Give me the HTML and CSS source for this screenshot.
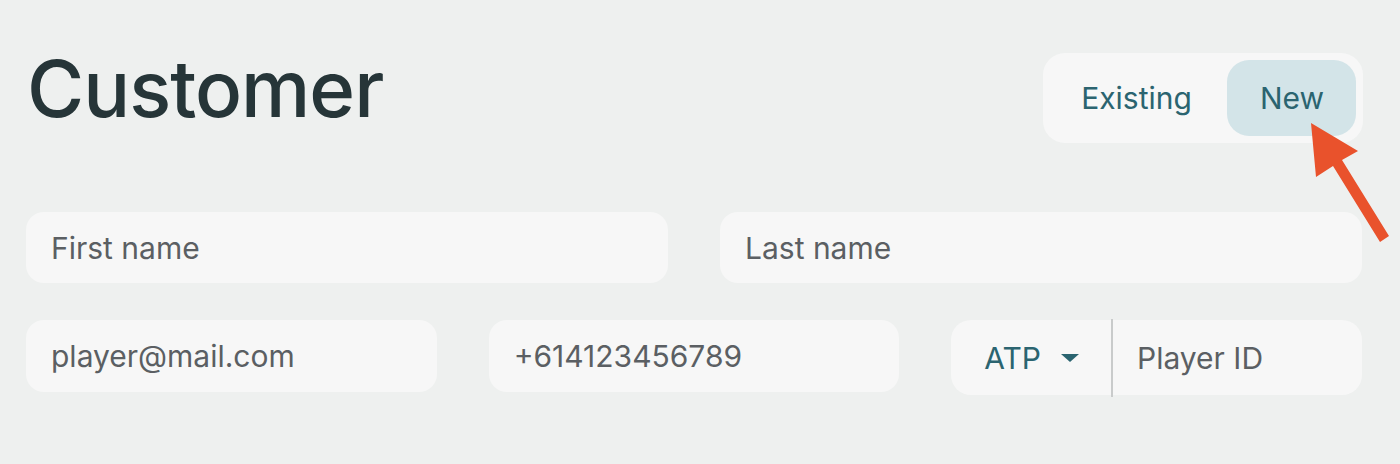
FILE: index.html
```html
<!DOCTYPE html>
<html lang="en">
<head>
<meta charset="utf-8">
<title>Customer</title>
<link rel="stylesheet" href="styles.css">
</head>
<body>
<div class="page">
  <div class="header">
    <h1 class="title">Customer</h1>
    <div class="toggle">
      <button class="toggle-btn">Existing</button>
      <button class="toggle-btn active">New</button>
    </div>
  </div>
  <div class="row row-2">
    <input class="field" type="text" placeholder="First name">
    <input class="field" type="text" placeholder="Last name">
  </div>
  <div class="row row-3">
    <input class="field" type="email" placeholder="player@mail.com">
    <input class="field" type="tel" placeholder="+614123456789">
    <div class="combo">
      <div class="select">
        <span class="select-label">ATP</span>
        <svg class="caret" width="18" height="8" viewBox="0 0 18 8"><path d="M0 0 L18 0 L9 8 Z" fill="#2b6470"/></svg>
      </div>
      <div class="divider"></div>
      <input class="combo-input" type="text" placeholder="Player ID">
    </div>
  </div>
</div>
<svg class="pointer" width="100" height="130" viewBox="1300 115 100 130">
  <path d="M1311 123 L1358 151 L1342 160 L1389 236 L1380 242 L1333 166 L1316 177 Z" fill="#e9522c"/>
</svg>
</body>
</html>
```
FILE: styles.css
```css
* { box-sizing: border-box; }
html, body { margin: 0; padding: 0; }
body {
  background: #eef0ef;
  font-family: Inter, "Noto Sans", sans-serif;
  width: 1400px;
  height: 464px;
  overflow: hidden;
  position: relative;
}
.page {
  padding: 53px 38px 0 26px;
}
.header {
  display: flex;
  justify-content: space-between;
  align-items: flex-start;
}
.title {
  margin: -3px 0 0 1px;
  font-size: 78px;
  line-height: 78px;
  font-weight: 500;
  color: #263538;
  letter-spacing: -1px;
}
.toggle {
  display: flex;
  padding: 7px;
  background: #f7f7f7;
  border-radius: 22px;
  margin-right: -1px;
}
.toggle-btn {
  height: 76px;
  padding: 0 34px 0 33px;
  border: none;
  background: transparent;
  font-family: inherit;
  font-size: 30px;
  color: #2b6470;
  border-radius: 22px;
}
.toggle-btn:first-child {
  padding: 0 35px 0 31px;
}
.toggle-btn.active {
  background: #d3e4e8;
  padding: 0 32px 0 33px;
}
.row {
  display: grid;
  gap: 52px;
}
.row-2 {
  grid-template-columns: 1fr 1fr;
  margin-top: 69px;
}
.row-3 {
  grid-template-columns: 1fr 1fr 1fr;
  margin-top: 37px;
  align-items: start;
}
.field, .combo-input {
  height: 72px;
  border: none;
  outline: none;
  background: #f7f7f7;
  border-radius: 18px;
  padding: 0 25px;
  font-family: inherit;
  font-size: 30px;
  color: #5b5f63;
  width: 100%;
  min-width: 0;
}
.row-2 .field { height: 71px; }
.field::placeholder, .combo-input::placeholder {
  color: #5b5f63;
  opacity: 1;
}
.combo {
  display: flex;
  align-items: center;
  height: 75px;
  background: #f7f7f7;
  border-radius: 20px;
}
.select {
  display: flex;
  align-items: center;
  gap: 20px;
  padding: 0 32px 0 33px;
  height: 100%;
  font-size: 30px;
  color: #2b6470;
}
.caret { display: block; }
.divider {
  width: 2px;
  align-self: stretch;
  margin: -1px 0 -2px;
  background: #c9cbcb;
}
.combo-input {
  flex: 1;
  height: 100%;
  background: transparent;
  padding: 0 24px;
}
.pointer {
  position: absolute;
  left: 1300px;
  top: 115px;
}
```
